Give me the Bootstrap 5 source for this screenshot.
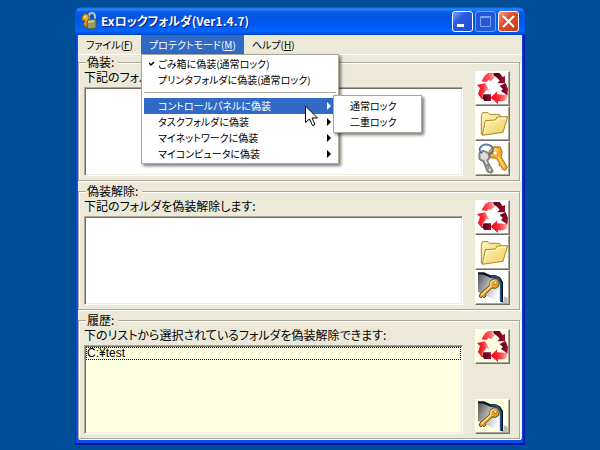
<!DOCTYPE html>
<html lang="ja">
<head>
<meta charset="utf-8">
<meta name="viewport" content="width=device-width, initial-scale=1">
<title>Exロックフォルダ</title>
<link href="https://cdn.jsdelivr.net/npm/bootstrap@5.3.0/dist/css/bootstrap.min.css" rel="stylesheet">
<style>
body{background:#004e98;color:#000;font:12px/16px "Noto Sans CJK JP",sans-serif;font-feature-settings:"palt";white-space:nowrap;cursor:default}
.xp-window{margin:7px 75px 0;padding:0 3px 3px;border-radius:7px 7px 0 0;background:linear-gradient(90deg,#0019cf,#0a5cf0 2px,#0a50e8 3px,#0a50e8 calc(100% - 3px),#0831d9 calc(100% - 2px),#00138c);box-shadow:inset 0 -2px #0019a0}
.xp-title{height:28px;margin:0 -3px;padding:0 6px;border-radius:7px 7px 0 0;background:linear-gradient(#0845c8,#2a88ff 2px,#0a5ce8 5px,#0054e0 10px,#0058ee 16px,#0066ff 24px,#0050d8 27px,#003dc0)}
.xp-title h1{font-size:12px;line-height:20px;font-weight:700;text-shadow:1px 1px #0a1883}
.cap-group{gap:2px}
.cap-btn{width:21px;height:21px;padding:0;border:1px solid #fff;border-radius:3px;background:linear-gradient(135deg,#7ba2f0,#2a5fe0 35%,#1c48cf);line-height:0}
.cap-btn:disabled{border-color:#7da2ee;background:#2358dc}
.cap-close{background:linear-gradient(135deg,#f0a088,#e0502c 40%,#c83a14)}
.cap-btn svg{display:block;width:19px;height:19px}
.client{background:#ece9d8}
.menu-bar{height:20px;border-bottom:1px solid #fff;font-size:10px}
.menu-bar button,.pop-menu button{border:0;background:none;color:inherit;font:inherit;font-feature-settings:inherit;text-align:left}
.menu-bar .top-item{height:19px;padding:0 8px;line-height:18px}
.menu-bar .is-open,.pop-menu .is-active{background:#316ac5;color:#fff}
.pop-menu{position:absolute;z-index:10;background:#fff;border:1px solid #aca899;box-shadow:2px 2px 3px #0008}
.main-pop{top:19px;left:0;width:198px;padding:1px 2px}
.sub-pop{top:-3px;left:189px;width:89px;padding:2px;color:#000}
.pop-menu button{display:flex;align-items:center;width:100%;height:16px;padding:0 5px 0 14px;line-height:14px}
.main-pop .tick{width:6px;height:6px;margin-left:-9px;margin-right:3px}
.menu-rule{margin:4px 0 5px;border:0;border-top:1px solid #aca899;opacity:1}
.arrow{width:4px;height:8px;margin-left:auto}
.pointer{position:absolute;left:161px;top:7px;width:13px;height:21px;z-index:12}
.group{margin:0 2px 3px 0;padding:2px 9px 4px 5px;border:1px solid #aca899;box-shadow:1px 1px #fff,inset 1px 1px #fff}
.group legend{float:none;width:auto;margin:0 0 0 2px;padding:0 4px 0 1px;font-size:12px;line-height:14px;background:#ece9d8}
.group-body{gap:12px;height:105px}
.list-label{padding-bottom:4px;line-height:12px}
.file-list{border:1px solid;border-color:#aca899 #fff #fff #aca899;box-shadow:inset 1px 1px #716f64,inset -1px -1px #f1efe2;background:#fff;padding:1px}
.history .file-list,.history .tool{background:#ffffe1}
.entry{height:13px;line-height:11px;border:1px dotted #000;font-family:"Liberation Sans","Noto Sans CJK JP",sans-serif}
.tool{width:35px;height:35px;padding:0;border:1px solid;border-color:#fff #716f64 #716f64 #fff;box-shadow:inset -1px -1px #aca899;background:#fff}
.tool svg{display:block;width:33px;height:33px}
</style>
<script src="https://cdn.jsdelivr.net/npm/bootstrap@5.3.0/dist/js/bootstrap.bundle.min.js"></script>
</head>
<body>
<svg class="position-absolute" width="0" height="0" aria-hidden="true">
  <defs>
    <linearGradient id="redA"><stop offset="0" stop-color="#ff1020"/><stop offset="1" stop-color="#ff9a98"/></linearGradient>
    <linearGradient id="redB"><stop offset="0" stop-color="#ff0010"/><stop offset=".5" stop-color="#f5303c"/><stop offset="1" stop-color="#ffb0ac"/></linearGradient>
    <linearGradient id="wine"><stop offset="0" stop-color="#4c0018"/><stop offset="1" stop-color="#a00c30"/></linearGradient>
    <linearGradient id="gold" x2="1" y2="1"><stop offset="0" stop-color="#fff6c0"/><stop offset="1" stop-color="#f0cc58"/></linearGradient>
    <linearGradient id="door" x2="1" y2=".6"><stop offset="0" stop-color="#555"/><stop offset=".5" stop-color="#b4b4b4"/><stop offset="1" stop-color="#fff"/></linearGradient>
    <symbol id="cycle" viewBox="3 3 99 99">
      <path fill="url(#redA)" d="M20 31 30 13 40 6H56L52 14 60 18 47 31 41 26 35 33Z"/>
      <path fill="url(#wine)" d="M56 6H74L83 18 90 15V37H67L74 29 66 20 55 13Z"/>
      <path fill="url(#wine)" d="M74 45 92 36 99 54 97 75 90 68 78 60 84 54Z"/>
      <path fill="url(#redB)" d="M47 80 66 61V70L98 72 94 87 85 91H69V99Z"/>
      <path fill="url(#wine)" d="M25 70H48V90H28L22 82Z"/>
      <path fill="url(#redB)" d="M6 42 31 37 43 59 35 57 24 69 20 85 9 69 15 51Z"/>
    </symbol>
    <symbol id="folder" viewBox="3 3 99 99">
      <path fill="url(#gold)" stroke="#b08818" stroke-width="3" d="M19 84V28L23 20H39L44 25H72L77 29V78Z"/>
      <path fill="url(#gold)" stroke="#b08818" stroke-width="3" d="M22 88 31 44 61 42 67 33 98 32 84 79Z"/>
      <path fill="none" stroke="#fffbe0" stroke-width="3" d="M27 82 35 48 64 46 70 37H93"/>
    </symbol>
    <symbol id="keys" viewBox="3 3 99 99">
      <path fill="#888" stroke="#777" stroke-width="3" d="M12 36 24 28 41 35 45 51 38 60 55 91 49 97 37 93 25 63 12 55Z"/>
      <path fill="#ddd" d="M16 38 26 32 38 39 40 50 33 57 49 88 43 92 28 58 17 53Z"/>
      <path fill="#888" d="M37 68 30 74 34 79 40 76 38 83 44 85 43 71Z"/>
      <path fill="#f5a92c" stroke="#b86e08" stroke-width="3" d="M42 30 56 17 76 18 82 34 78 47 97 79 91 88 82 85 79 75 72 73 73 66 64 52 46 50Z"/>
      <path fill="none" stroke="#ffdb78" stroke-width="5" d="M51 31 61 25 70 28M70 48 88 79"/>
      <circle cx="61" cy="36" r="5" fill="#fff"/>
      <path fill="none" stroke="#526887" stroke-width="6" d="M21 37C5 22 23 8 38 11 58 14 57 35 42 39"/>
      <path fill="none" stroke="#a9bdd4" stroke-width="2" d="M20 33C8 20 24 10 37 12 53 14 54 31 43 36"/>
    </symbol>
    <symbol id="doorkey" viewBox="3 3 99 99">
      <path fill="url(#door)" d="M9 12 27 13 49 24 75 29V97L9 66Z"/>
      <path fill="#888" opacity=".55" d="M86 78 98 84V100H75L86 93Z"/>
      <path fill="#0c1024" d="M9 7H27L47 16 61 15 75 22 84 36V96H76V42L67 27 48 24 25 14 9 13Z"/>
      <path fill="none" stroke="#146098" stroke-width="5" d="M49 20 61 19 71 26 77 40V94"/>
      <path fill="#dda02c" stroke="#704c08" stroke-width="3" d="M45 34 54 27 66 27 73 36 71 49 62 55 51 54 31 73 33 78 27 83 22 79 18 84 12 79 15 72 45 45Z"/>
      <path fill="none" stroke="#ffe08c" stroke-width="4" d="M18 76 47 49 48 36 57 31H64"/>
      <circle cx="61" cy="38" r="5" fill="#fff0b0" stroke="#8a5b0c" stroke-width="2"/>
    </symbol>
  </defs>
</svg>

<main class="xp-window">
  <header class="xp-title d-flex align-items-center text-white">
    <svg width="16" height="18" viewBox="0 0 16 18" aria-hidden="true">
      <path fill="none" stroke="#b8c0bc" stroke-width="2" d="M8 9V4q0-3 3-3t3 4v4"/>
      <path fill="#969b62" stroke="#555c35" d="M6 8 15 7V16L8 17 6 15Z"/><path fill="#c9cda0" d="M7 9 13 8V10L7 11Z"/>
      <path fill="#e4a431" stroke="#8e5a0a" d="M1 5 3 2H6L8 4V7L6 9 6 15 4 15 4 13 2 13 4 9 1 8Z"/><circle cx="4" cy="5" r="1" fill="#fff0a0"/>
    </svg>
    <h1 class="mb-0 ms-1 me-auto">Exロックフォルダ(Ver1.4.7)</h1>
    <div class="cap-group d-flex">
      <button class="cap-btn" type="button" aria-label="最小化"><svg viewBox="0 0 19 19"><path fill="#fff" d="M4 12h7v3H4z"/></svg></button>
      <button class="cap-btn" type="button" aria-label="最大化" disabled><svg viewBox="0 0 19 19"><path fill="none" stroke="#7da2ee" d="M4.5 5.5h10v9h-10zM4 4.5h11"/></svg></button>
      <button class="cap-btn cap-close" type="button" aria-label="閉じる"><svg viewBox="0 0 19 19"><path stroke="#fff" stroke-width="2" d="m4 4 11 11M15 4 4 15"/></svg></button>
    </div>
  </header>
  <div class="client">
    <nav class="menu-bar d-flex" aria-label="メニュー">
      <button class="top-item" type="button">ファイル(<u>F</u>)</button>
      <div class="position-relative">
        <button class="top-item is-open" type="button" aria-expanded="true">プロテクトモード(<u>M</u>)</button>
        <div class="pop-menu main-pop" role="menu">
          <button type="button" role="menuitemradio" aria-checked="true"><svg class="tick" viewBox="0 0 6 6" aria-hidden="true"><path fill="none" stroke="#000" stroke-width="1.5" d="M0 2 2 4 5 1"/></svg>ごみ箱に偽装(通常ロック)</button>
          <button type="button" role="menuitem">プリンタフォルダに偽装(通常ロック)</button>
          <hr class="menu-rule">
          <div class="position-relative">
            <button class="is-active" type="button" role="menuitem">コントロールパネルに偽装<svg class="arrow" viewBox="0 0 4 8"><path fill="currentColor" d="M0 0 4 4 0 8z"/></svg></button>
            <div class="pop-menu sub-pop" role="menu">
              <button type="button" role="menuitem">通常ロック</button>
              <button type="button" role="menuitem">二重ロック</button>
            </div>
            <svg class="pointer" viewBox="0 0 13 21" aria-hidden="true"><path fill="#fff" stroke="#000" d="M.5 1V17.5L4.5 14 7.5 20.5 10 19.5 7 13H12.5Z"/></svg>
          </div>
          <button type="button" role="menuitem">タスクフォルダに偽装<svg class="arrow" viewBox="0 0 4 8"><path d="M0 0 4 4 0 8z"/></svg></button>
          <button type="button" role="menuitem">マイネットワークに偽装<svg class="arrow" viewBox="0 0 4 8"><path d="M0 0 4 4 0 8z"/></svg></button>
          <button type="button" role="menuitem">マイコンピュータに偽装<svg class="arrow" viewBox="0 0 4 8"><path d="M0 0 4 4 0 8z"/></svg></button>
        </div>
      </div>
      <button class="top-item" type="button">ヘルプ(<u>H</u>)</button>
    </nav>

    <fieldset class="group">
      <legend>偽装:</legend>
      <div class="group-body d-flex">
        <div class="d-flex flex-column flex-fill">
          <div class="list-label" id="hide-label">下記のフォルダを偽装します:</div>
          <div class="file-list flex-fill" role="listbox" aria-labelledby="hide-label"></div>
        </div>
        <div class="d-flex flex-column justify-content-between">
          <button class="tool" type="button" aria-label="クリア"><svg><use href="#cycle"/></svg></button>
          <button class="tool" type="button" aria-label="フォルダを開く"><svg><use href="#folder"/></svg></button>
          <button class="tool" type="button" aria-label="偽装"><svg><use href="#keys"/></svg></button>
        </div>
      </div>
    </fieldset>

    <fieldset class="group">
      <legend>偽装解除:</legend>
      <div class="group-body d-flex">
        <div class="d-flex flex-column flex-fill">
          <div class="list-label" id="show-label">下記のフォルダを偽装解除します:</div>
          <div class="file-list flex-fill" role="listbox" aria-labelledby="show-label"></div>
        </div>
        <div class="d-flex flex-column justify-content-between">
          <button class="tool" type="button" aria-label="クリア"><svg><use href="#cycle"/></svg></button>
          <button class="tool" type="button" aria-label="フォルダを開く"><svg><use href="#folder"/></svg></button>
          <button class="tool" type="button" aria-label="偽装解除"><svg><use href="#doorkey"/></svg></button>
        </div>
      </div>
    </fieldset>

    <fieldset class="group history">
      <legend>履歴:</legend>
      <div class="group-body d-flex">
        <div class="d-flex flex-column flex-fill">
          <div class="list-label" id="past-label">下のリストから選択されているフォルダを偽装解除できます:</div>
          <div class="file-list flex-fill" role="listbox" aria-labelledby="past-label"><div class="entry" role="option" tabindex="0">C:¥test</div></div>
        </div>
        <div class="d-flex flex-column justify-content-between">
          <button class="tool" type="button" aria-label="クリア"><svg><use href="#cycle"/></svg></button>
          <button class="tool" type="button" aria-label="偽装解除"><svg><use href="#doorkey"/></svg></button>
        </div>
      </div>
    </fieldset>
  </div>
</main>
</body>
</html>
